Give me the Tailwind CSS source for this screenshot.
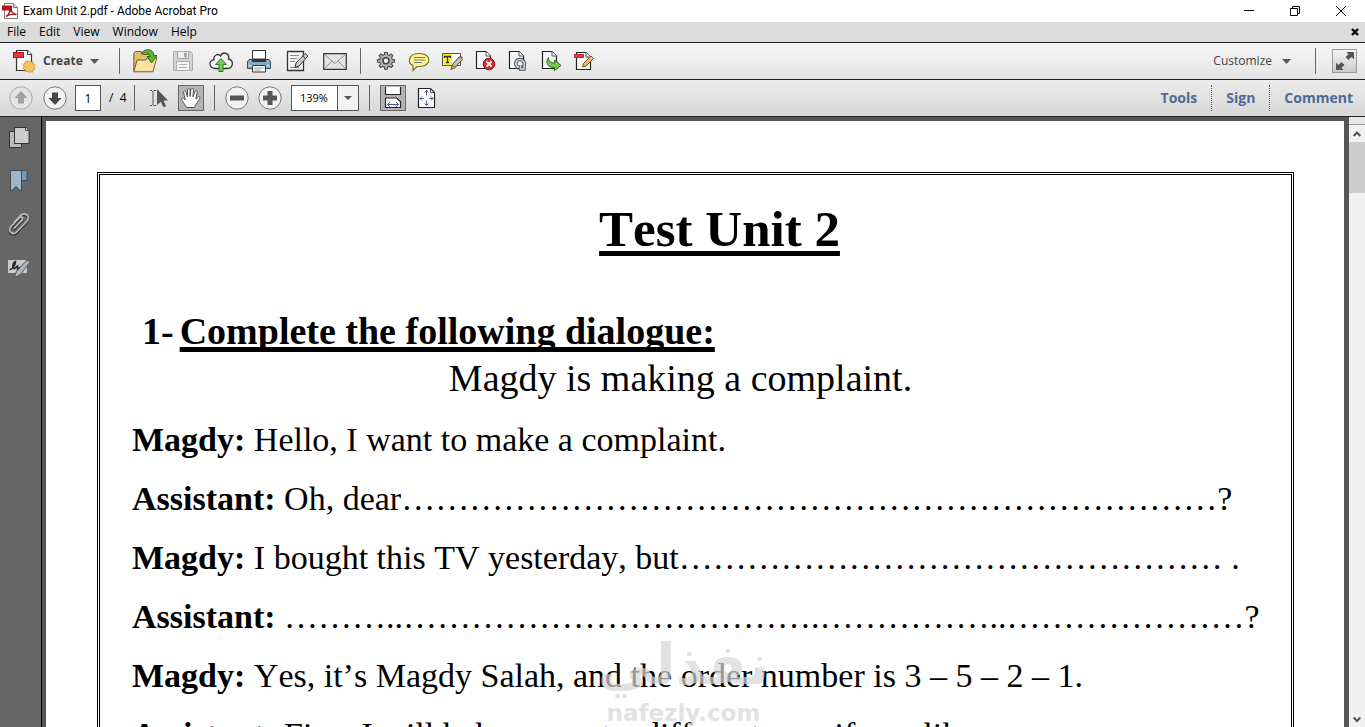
<!DOCTYPE html>
<html lang="en" class="h-full">
<head>
    <meta charset="UTF-8">
    <meta name="viewport" content="width=device-width, initial-scale=1.0">
    <title>Exam Unit 2.pdf - Adobe Acrobat Pro</title>
    <script src="https://cdn.jsdelivr.net/npm/@tailwindcss/browser@4"></script>
</head>
<body class="h-screen flex flex-col overflow-hidden bg-white text-black text-xs font-['Open_Sans','Noto_Sans',sans-serif]">

    <!-- Title bar -->
    <header class="h-[22px] shrink-0 flex items-center justify-between pl-[2px] pr-px bg-white">
        <div class="flex items-center gap-[5px]">
            <svg class="w-4 h-4" viewBox="0 0 16 16">
                <path d="M2.500.5h9l4 4v11h-13z" fill="#fff" stroke="#777"/>
                <path d="M11.500.5v4h4" fill="#ddd" stroke="#777"/>
                <path d="M0 2.500h10v5H0z" fill="#b5121b"/>
                <path d="M4 13.500c2-1 4-4.500 4.500-8.500 .5 4 2.500 6 6 6.500-3-.8-7-.2-10.500 2z" fill="none" stroke="#b5121b" stroke-width="1.400"/>
            </svg>
            <h1 class="text-xs leading-4 font-['Roboto',sans-serif]">Exam Unit 2.pdf - Adobe Acrobat Pro</h1>
        </div>
        <div class="flex items-center">
            <button type="button" aria-label="Minimize" class="w-[46px] h-5 flex justify-center items-center">
                <svg class="w-3 h-3" viewBox="0 0 12 12"><path d="M1 5.500h10" stroke="#000"/></svg>
            </button>
            <button type="button" aria-label="Restore" class="w-[46px] h-5 flex justify-center items-center">
                <svg class="w-3 h-3" viewBox="0 0 12 12" fill="none" stroke="#000"><path d="M1.500 3.500h7v7h-7zM3.500 3.500v-2h7v7h-2"/></svg>
            </button>
            <button type="button" aria-label="Close" class="w-[46px] h-5 flex justify-center items-center">
                <svg class="w-3 h-3" viewBox="0 0 12 12"><path d="M1 1l10 10M11 1L1 11" stroke="#000"/></svg>
            </button>
        </div>
    </header>

    <!-- Menu bar -->
    <nav class="h-5 shrink-0 flex items-center justify-between pl-[7px] pr-1 bg-[#dcdcdc]">
        <div class="flex gap-[13px] leading-4">
            <a href="#">File</a>
            <a href="#">Edit</a>
            <a href="#">View</a>
            <a href="#">Window</a>
            <a href="#">Help</a>
        </div>
        <button type="button" aria-label="Close document">
            <svg class="w-3 h-3" viewBox="0 0 12 12"><path d="M3 3l6 6M9 3L3 9" stroke="#000" stroke-width="2.400"/></svg>
        </button>
    </nav>

    <!-- File toolbar -->
    <div class="h-[37px] shrink-0 flex items-center justify-between border-t border-[#222] bg-linear-to-b from-[#f6f6f6] to-[#e4e4e4] pl-3 pr-2">
        <div class="flex items-center">
            <button type="button" class="flex items-center gap-[7px] text-[#444] font-bold w-[87px]">
                <svg class="w-6 h-6 shrink-0" viewBox="0 0 24 24">
                    <path d="M4.500 1.500h11l4 4v16h-15z" fill="#f8f8f8" stroke="#333" stroke-width="1.200"/>
                    <path d="M15.500 1.500v4h4" fill="#fff" stroke="#333"/>
                    <rect x="1.500" y="3.500" width="10" height="5" fill="#e8343f" stroke="#b3121d"/>
                    <path d="M17 11.500l1.500 1.800 2.300-.6.200 2.300 2.100 1.100-1.200 2 1.200 2-2.300.9-.3 2.200-2.200-.5L17 23.500l-1.500-1.300-2.200.6-.2-2.300-2.100-1.100 1.200-1.900-1.200-2 2.200-1 .2-2.300 2.300.7z" fill="#fbc35f" stroke="#c98a34" stroke-width=".8"/>
                </svg>
                <span>Create</span>
                <svg class="w-[9px] h-[5px] shrink-0" viewBox="0 0 9 5"><path d="M0 0h9L4.500 5z" fill="#555"/></svg>
            </button>
            <span class="ml-5 mr-[13px] w-px h-[26px] bg-[#666]"></span>
            <div class="flex items-center gap-[14px]">
                <button type="button" aria-label="Open">
                    <svg class="w-6 h-6" viewBox="0 0 24 24">
                        <path d="M.8 22V4.500l1.500-2h6l1.500 3h9.500V12" fill="#e2bf6c" stroke="#6f5a2a"/>
                        <path d="M.8 22.800L4 11h9l1.500-2.500h9.300L20 22.800z" fill="#fae3a0" stroke="#6f5a2a"/>
                        <path d="M8 5C11-.5 20-1.500 21 6.500h3L18.500 14 14 7.500h3C16.500 4 12 3 8 5z" fill="#5cb531" stroke="#28691a"/>
                    </svg>
                </button>
                <button type="button" aria-label="Save">
                    <svg class="w-6 h-6" viewBox="0 0 24 24" stroke="#aaa">
                        <path d="M2.500 2.500h17l2 2v17h-19z" fill="#d4d4d4"/>
                        <path d="M6.500 2.500h11v7h-11z" fill="#eee"/>
                        <path d="M13.500 4h2v4h-2z" fill="#aaa"/>
                        <path d="M5.500 12.500h13v9h-13z" fill="#f7f7f7"/>
                        <path d="M8 15.500h8M8 18.500h8"/>
                    </svg>
                </button>
                <button type="button" aria-label="Upload">
                    <svg class="w-6 h-6" viewBox="0 0 24 24">
                        <path d="M6 19.500C-.5 19 -.5 11 5 10.800 4 6 9.500 4 11.500 7 14 1.500 21 4.500 19.500 10.200c5.500 1 5 9-1 9.300z" fill="#f5f5f5" stroke="#333" stroke-width="1.300"/>
                        <path d="M12 9.500l5.500 6H14v7h-4v-7H6.500z" fill="#7cc857" stroke="#2d7a1d"/>
                    </svg>
                </button>
                <button type="button" aria-label="Print">
                    <svg class="w-6 h-6" viewBox="0 0 24 24">
                        <path d="M5.500 1.500h13v9h-13z" fill="#fff" stroke="#333"/>
                        <path d="M2 10.500h20l1.500 2v7h-23v-7z" fill="#82acc8" stroke="#34495a"/>
                        <path d="M5 9.500h14v3.500H5z" fill="#333"/>
                        <path d="M1 16h22v1.500H1z" fill="#b9d3e3"/>
                        <path d="M5.500 16.500h13v6.500h-13z" fill="#fff" stroke="#333"/>
                        <path d="M7.500 19h9M7.500 21h6" stroke="#999"/>
                    </svg>
                </button>
                <button type="button" aria-label="Sign document">
                    <svg class="w-6 h-6" viewBox="0 0 24 24">
                        <path d="M2.500 2.500h16v19h-16z" fill="#f5f5f5" stroke="#333" stroke-width="1.300"/>
                        <path d="M5 6.500h9M5 9.500h7M5 12.500h5M5 18.500h9" stroke="#888"/>
                        <path d="M10 18.500l1-4.500L20 4.500l3 2.500L14 17z" fill="#c3ced6" stroke="#333"/>
                        <path d="M17.500 7l3 2.500" stroke="#333"/>
                    </svg>
                </button>
                <button type="button" aria-label="Email">
                    <svg class="w-6 h-6" viewBox="0 0 24 24">
                        <path d="M.7 4.700h22.600v15.600H.7z" fill="#e3e3e3" stroke="#333" stroke-width="1.200"/>
                        <path d="M1 5l11 9.500L23 5M1 20l8-8M23 20l-8-8" fill="none" stroke="#888" stroke-width=".9"/>
                    </svg>
                </button>
            </div>
            <span class="mx-[13px] w-px h-[26px] bg-[#666]"></span>
            <div class="flex items-center gap-[9px]">
                <button type="button" aria-label="Settings">
                    <svg class="w-6 h-6" viewBox="-2 -1 28 28">
                        <path d="M10.500 3h3l.5 2.700 1.700.7 2.300-1.600 2 2-1.500 2.300.7 1.800 2.800.5v2.800l-2.800.5-.7 1.700 1.500 2.400-2 2-2.300-1.600-1.700.7-.5 2.700h-3l-.5-2.700-1.700-.7L6 20.800l-2-2 1.500-2.400-.7-1.700-2.800-.5v-2.800l2.800-.5.7-1.800L4 6.800l2-2 2.300 1.600 1.700-.7z" fill="#b0b0b0" stroke="#444" stroke-width="1.200"/>
                        <circle cx="12" cy="12.700" r="3.500" fill="#f0f0f0" stroke="#444" stroke-width="1.800"/>
                    </svg>
                </button>
                <button type="button" aria-label="Add note">
                    <svg class="w-6 h-6" viewBox="0 0 24 24">
                        <path d="M12.500 4.500c12.500 0 12.500 13 0 13h-2.500L6 21.500v-5C-.5 13 2 4.500 12.500 4.500z" fill="#fdf590" stroke="#777330" stroke-width="1.200"/>
                        <path d="M7 8.500h11M7 11h11M7 13.500h8" stroke="#777"/>
                    </svg>
                </button>
                <button type="button" aria-label="Highlight text">
                    <svg class="w-6 h-6" viewBox="0 0 24 24">
                        <path d="M2.500 4.500h18v12h-18z" fill="#fff" stroke="#555"/>
                        <path d="M3 5h9v11H3z" fill="#ffee2e"/>
                        <path d="M4.500 9V7.500h6V9M7.500 7.500v6M6 13.500h3" fill="none" stroke="#333" stroke-width="1.300"/>
                        <path d="M11 20.500l1.500-5 6.500-7.500h3V11l-6.500 7z" fill="#c8c0b8" stroke="#444"/>
                        <path d="M11 20.500l1.500-4 3 2z" fill="#f5d800" stroke="#776a10"/>
                    </svg>
                </button>
                <button type="button" aria-label="Delete page">
                    <svg class="w-6 h-6" viewBox="0 0 24 24">
                        <path d="M3.500 2.500h9.500l4.500 4.500v12.500h-14z" fill="#f8f8f8" stroke="#222" stroke-width="1.200"/>
                        <path d="M13 2.500v4.500h4.500" fill="#fff" stroke="#555"/>
                        <circle cx="16" cy="15" r="5.800" fill="#dc2630" stroke="#8d1118"/>
                        <path d="M13.500 12.500l5 5M18.500 12.500l-5 5" stroke="#fff" stroke-width="1.800"/>
                    </svg>
                </button>
                <button type="button" aria-label="Attach file">
                    <svg class="w-6 h-6" viewBox="0 0 24 24">
                        <path d="M3.500 2.500h9.500l4.500 4.500v12.500h-14z" fill="#f8f8f8" stroke="#222" stroke-width="1.200"/>
                        <path d="M13 2.500v4.500h4.500" fill="#fff" stroke="#555"/>
                        <path d="M11.500 18c-3.500-3.500-1-7.500 2.500-7.500s5.500 3.500 4 7v2.500h-3.500v-4" fill="none" stroke="#3f5062" stroke-width="3.400"/>
                        <path d="M11.500 18c-3.500-3.500-1-7.500 2.500-7.500s5.500 3.500 4 7v2.500h-3.500v-4" fill="none" stroke="#cbd8e4" stroke-width="1.600"/>
                    </svg>
                </button>
                <button type="button" aria-label="Export page">
                    <svg class="w-6 h-6" viewBox="0 0 24 24">
                        <path d="M3.500 2.500h9.500l4.500 4.500v12.500h-14z" fill="#f8f8f8" stroke="#222" stroke-width="1.200"/>
                        <path d="M13 2.500v4.500h4.500" fill="#fff" stroke="#555"/>
                        <path d="M9.500 8.500c0 4 2 5.500 6 5.500v-3l6.500 5.500-6.500 5V18.500C8.500 18.500 6 14 9.500 8.500z" fill="#7cc857" stroke="#28691a"/>
                    </svg>
                </button>
                <button type="button" aria-label="Edit PDF">
                    <svg class="w-6 h-6" viewBox="0 0 24 24">
                        <path d="M4.500 3.500h9.500l4.500 4.500v12.500h-14z" fill="#f8f8f8" stroke="#222" stroke-width="1.200"/>
                        <path d="M14 3.500v4.500h4.500" fill="#fff" stroke="#555"/>
                        <path d="M2.500 5.500h9v3h-9z" fill="#ef3b47" stroke="#c2202b"/>
                        <path d="M10.500 18l1-3.500 7.500-7.500 2.500 2.500L14 17z" fill="#f6b95a" stroke="#7b4f16"/>
                    </svg>
                </button>
            </div>
        </div>
        <div class="flex items-center">
            <button type="button" class="flex items-center gap-[10px] text-[#444]">
                <span>Customize</span>
                <svg class="w-[9px] h-[5px]" viewBox="0 0 9 5"><path d="M0 0h9L4.500 5z" fill="#555"/></svg>
            </button>
            <span class="ml-6 mr-4 w-px h-[26px] bg-[#666]"></span>
            <button type="button" aria-label="Read mode" class="w-[25px] h-6 flex items-center justify-center border border-[#999] bg-linear-to-b from-[#f4f4f4] to-[#ccc]">
                <svg class="w-5 h-5" viewBox="0 0 20 20" fill="#555">
                    <path d="M11.500 1H19v7.500l-2.500-2.500-3 3-3-3 3-2.800zM8.500 19H1v-7.500L3.500 14l3-3 3 3-3 2.800z"/>
                </svg>
            </button>
        </div>
    </div>

    <!-- Page toolbar -->
    <div class="h-[37px] shrink-0 flex items-center justify-between border-t border-[#222] bg-linear-to-b from-[#ececec] to-[#d6d6d6] pl-[9px] pr-3">
        <div class="flex items-center">
            <div class="flex gap-[10px]">
                <button type="button" aria-label="Previous page" disabled>
                    <svg class="w-6 h-6" viewBox="0 0 24 24">
                        <circle cx="12" cy="12" r="11.200" fill="#e4e4e4" stroke="#aaa"/>
                        <path d="M12 5l6.500 7H15v5.500H9V12H5.500z" fill="#a2a2a2"/>
                    </svg>
                </button>
                <button type="button" aria-label="Next page">
                    <svg class="w-6 h-6" viewBox="0 0 24 24">
                        <circle cx="12" cy="12" r="11.200" fill="#f2f2f2" stroke="#777"/>
                        <path d="M12 19l-6.500-7H9V6.500h6V12h3.500z" fill="#484848"/>
                    </svg>
                </button>
            </div>
            <label class="flex items-center gap-2 ml-2 w-[50px]">
                <input type="text" value="1" aria-label="Page number" class="w-[26px] h-[26px] shrink-0 border border-[#555] bg-white text-center">
                <span class="whitespace-pre">/  4</span>
            </label>
            <span class="ml-[9px] mr-[13px] w-px h-[26px] bg-[#666]"></span>
            <button type="button" aria-label="Selection tool">
                <svg class="w-6 h-6" viewBox="0 0 24 24">
                    <path d="M2 4.500h2l1 1 1-1h2M5 5.500v13M2 19.500h2l1-1 1 1h2" fill="none" stroke="#555"/>
                    <path d="M9 3l11 11.500h-4.500l2.500 5.500-2.500 1.200-2.700-5.500L9 19z" fill="#555"/>
                </svg>
            </button>
            <button type="button" aria-label="Hand tool" class="ml-[6px] w-[26px] h-[26px] flex items-center justify-center border border-[#666] bg-[#b4b4b4]">
                <svg class="w-[22px] h-[22px]" viewBox="0 0 22 22">
                    <path d="M6.500 20.500c-1-3-3.500-5-5-8 0-2 2-2 3.500.5V12L3.500 5c0-1.500 2-1.700 2.500 0l1.500 5V3c0-1.700 2.500-1.700 2.500 0v6.500l1-7c.3-1.500 2.500-1.300 2.500.3l-.5 7 2-5.300c.5-1.400 2.500-1 2.300.5L15.800 12l2-2c1.200-1 2.700 0 2 1.400-1.300 3-4.300 5.600-5.300 9.100z" fill="#fff" stroke="#555"/>
                </svg>
            </button>
            <span class="mx-[10px] w-px h-[26px] bg-[#666]"></span>
            <div class="flex gap-[9px]">
                <button type="button" aria-label="Zoom out">
                    <svg class="w-6 h-6" viewBox="0 0 24 24">
                        <circle cx="12" cy="12" r="11.200" fill="#f2f2f2" stroke="#777"/>
                        <path d="M5 9.500h14v5H5z" fill="#555"/>
                    </svg>
                </button>
                <button type="button" aria-label="Zoom in">
                    <svg class="w-6 h-6" viewBox="0 0 24 24">
                        <circle cx="12" cy="12" r="11.200" fill="#f2f2f2" stroke="#777"/>
                        <path d="M9.500 5h5v4.500H19v5h-4.500V19h-5v-4.500H5v-5h4.500z" fill="#555"/>
                    </svg>
                </button>
            </div>
            <div class="relative ml-[9px] w-[68px] h-[26px]">
                <select aria-label="Zoom level" class="appearance-none w-full h-full pl-2 border border-[#555] bg-white text-[11px]">
                    <option>139%</option>
                    <option>100%</option>
                </select>
                <span class="absolute right-px inset-y-px w-[21px] flex items-center justify-center border-l border-[#555] bg-[#f2f2f2] pointer-events-none">
                    <svg class="w-2 h-1" viewBox="0 0 8 4"><path d="M0 0h8L4 4z" fill="#555"/></svg>
                </span>
            </div>
            <span class="mx-[10px] w-px h-[26px] bg-[#666]"></span>
            <button type="button" aria-label="Fit width" class="w-[26px] h-[26px] flex items-center justify-center border border-[#666] bg-[#b4b4b4]">
                <svg class="w-5 h-[22px]" viewBox="0 0 20 22">
                    <path d="M2.500 0v7.500h15V0" fill="#fff" stroke="#222" stroke-width="1.200"/>
                    <path d="M2.500 20.500V11h11l4 3.500v6z" fill="#fff" stroke="#222" stroke-width="1.200"/>
                    <path d="M4.500 17.500h11M7 15l-2.500 2.500L7 20M13 15l2.500 2.500L13 20" fill="none" stroke="#4a5a94"/>
                </svg>
            </button>
            <button type="button" aria-label="Fit page" class="ml-2">
                <svg class="w-6 h-6" viewBox="0 0 24 24">
                    <path d="M4.500 2.500h12l4 4v15h-16z" fill="#fff" stroke="#222" stroke-width="1.200"/>
                    <path d="M16.500 2.500v4h4" fill="none" stroke="#555"/>
                    <path d="M12.500 4.500v5M12.500 14.500v5M6 12.500h4M15 12.500h4M10.500 6.500l2-2 2 2M10.500 17.500l2 2 2-2M8 10.500l-2 2 2 2M17 10.500l2 2-2 2" fill="none" stroke="#4a5a94"/>
                </svg>
            </button>
        </div>
        <div class="flex items-center text-[14px] leading-[26px] font-bold text-[#4f6a94]">
            <a href="#" class="pr-[14px]">Tools</a>
            <a href="#" class="px-[14px] border-l border-dotted border-[#555]">Sign</a>
            <a href="#" class="pl-[14px] border-l border-dotted border-[#555]">Comment</a>
        </div>
    </div>

    <div class="flex-1 min-h-0 flex border-t border-[#222]">
        <!-- Navigation panes -->
        <aside class="w-[42px] shrink-0 flex flex-col gap-[19px] pt-[9px] pl-[7px] bg-[#666] border-r border-black">
            <button type="button" aria-label="Page thumbnails" class="w-6 h-6">
                <svg class="w-6 h-6" viewBox="0 0 24 24">
                    <path d="M2.500 5.500h12v16h-12z" fill="#bbb" stroke="#333"/>
                    <path d="M7.500 1.500h12l2.500 3v13H7.500z" fill="#cdcdcd" stroke="#333"/>
                    <path d="M18.500 1.500v3H22" fill="none" stroke="#555"/>
                </svg>
            </button>
            <button type="button" aria-label="Bookmarks" class="w-6 h-6">
                <svg class="w-6 h-6" viewBox="0 0 24 24">
                    <path d="M12.500 1.500h7.500v10h-7.500z" fill="#7d9ab3" stroke="#3f4e5b"/>
                    <path d="M3.500 1.500h11v21L9 17.500l-5.500 5z" fill="#9cb6cc" stroke="#3f4e5b"/>
                </svg>
            </button>
            <button type="button" aria-label="Attachments" class="w-6 h-6">
                <svg class="w-6 h-6" viewBox="1 0 24 24" fill="none">
                    <path d="M8 16.500l8-8.500c2-2.500-1-4-2.500-2.500L5 14.500c-4 5 2 9 5.500 5.500L21 9c4-5-2-9.500-6.500-5.500L8 10.500" transform="translate(0 1)" stroke="#3a3a3a" stroke-width="2.600"/>
                    <path d="M8 16.500l8-8.500c2-2.500-1-4-2.500-2.500L5 14.500c-4 5 2 9 5.500 5.500L21 9c4-5-2-9.500-6.500-5.500L8 10.500" stroke="#bdbdbd" stroke-width="1.700"/>
                </svg>
            </button>
            <button type="button" aria-label="Signatures" class="w-6 h-6">
                <svg class="w-6 h-6" viewBox="0 0 24 24">
                    <path d="M1 5h19v13H1z" fill="#c9c9c9"/>
                    <path d="M2.500 14.500c3 .5 6.500-5.500 6-8-3 1-3.500 8-1 7l3-2.500v3l3-2" fill="none" stroke="#222" stroke-width="1.500"/>
                    <path d="M8 20.500l1.500-4L20 5l3 2-9.500 12.500L9 22z" fill="#aab7c4" stroke="#555"/>
                </svg>
            </button>
        </aside>

        <!-- Document -->
        <main class="relative flex-1 min-w-0 overflow-hidden bg-[#555] pt-1 pl-1 pr-[5px]">
            <article class="h-full bg-white pt-[51px] pl-[51px] pr-[50px] font-['Liberation_Serif',serif] [font-kerning:none]">
                <div class="border-3 border-b-0 border-double border-black pl-8 whitespace-nowrap">
                    <h2 class="pt-6 pl-4 text-center text-[51px] leading-[60px] font-bold underline decoration-[5px] underline-offset-[5px] [text-decoration-skip-ink:none]">Test Unit 2</h2>
                    <h3 class="mt-[49px] pl-[10px] text-[38px] leading-[47px] font-bold flex gap-[6px]">
                        <span>1-</span>
                        <span class="underline decoration-[5px] underline-offset-[3px] [text-decoration-skip-ink:none]">Complete the following dialogue:</span>
                    </h3>
                    <p class="pr-[62px] text-center text-[38px] leading-[47px]">Magdy is making a complaint.</p>
                    <div class="pt-2 text-[34px] leading-[59px]">
                        <p><b>Magdy:</b> Hello, I want to make a complaint.</p>
                        <p><b>Assistant:</b> Oh, dear………………………………………………………………?</p>
                        <p><b>Magdy:</b> I bought this TV yesterday, but………………………………………… .</p>
                        <p><b>Assistant:</b> ………..……………………………….……………..…………………?</p>
                        <p><b>Magdy:</b> Yes, it’s Magdy Salah, and the order number is 3 – 5 – 2 – 1.</p>
                        <p><b>Assistant:</b> Fine, I will help you get a different one, if you like.</p>
                    </div>
                </div>
            </article>
            <!-- Watermark -->
            <div class="absolute inset-x-0 bottom-0 pr-6 flex flex-col items-center text-[#d6d6d6] opacity-70 font-bold pointer-events-none font-['DejaVu_Sans',sans-serif]">
                <span lang="ar" dir="rtl" class="text-[56px] leading-[68px]">نفذلي</span>
                <span class="text-[23px] leading-[28px]">nafezly.com</span>
            </div>
        </main>

        <!-- Scroll bar -->
        <div class="w-4 shrink-0 flex flex-col bg-[#f0f0f0]">
            <div class="h-2 border-b border-[#999] bg-[#e6e6e6]"></div>
            <button type="button" aria-label="Scroll up" class="h-[17px] flex items-center justify-center">
                <svg class="w-2 h-2" viewBox="0 0 8 8"><path d="M.7 6L4 2.500 7.300 6" fill="none" stroke="#505050" stroke-width="2"/></svg>
            </button>
            <div class="h-[51px] bg-[#cdcdcd]"></div>
            <button type="button" aria-label="Scroll down" class="mt-auto h-[17px] flex items-center justify-center">
                <svg class="w-2 h-2" viewBox="0 0 8 8"><path d="M.7 2.500L4 6l3.300-3.500" fill="none" stroke="#505050" stroke-width="2"/></svg>
            </button>
        </div>
    </div>
</body>
</html>
